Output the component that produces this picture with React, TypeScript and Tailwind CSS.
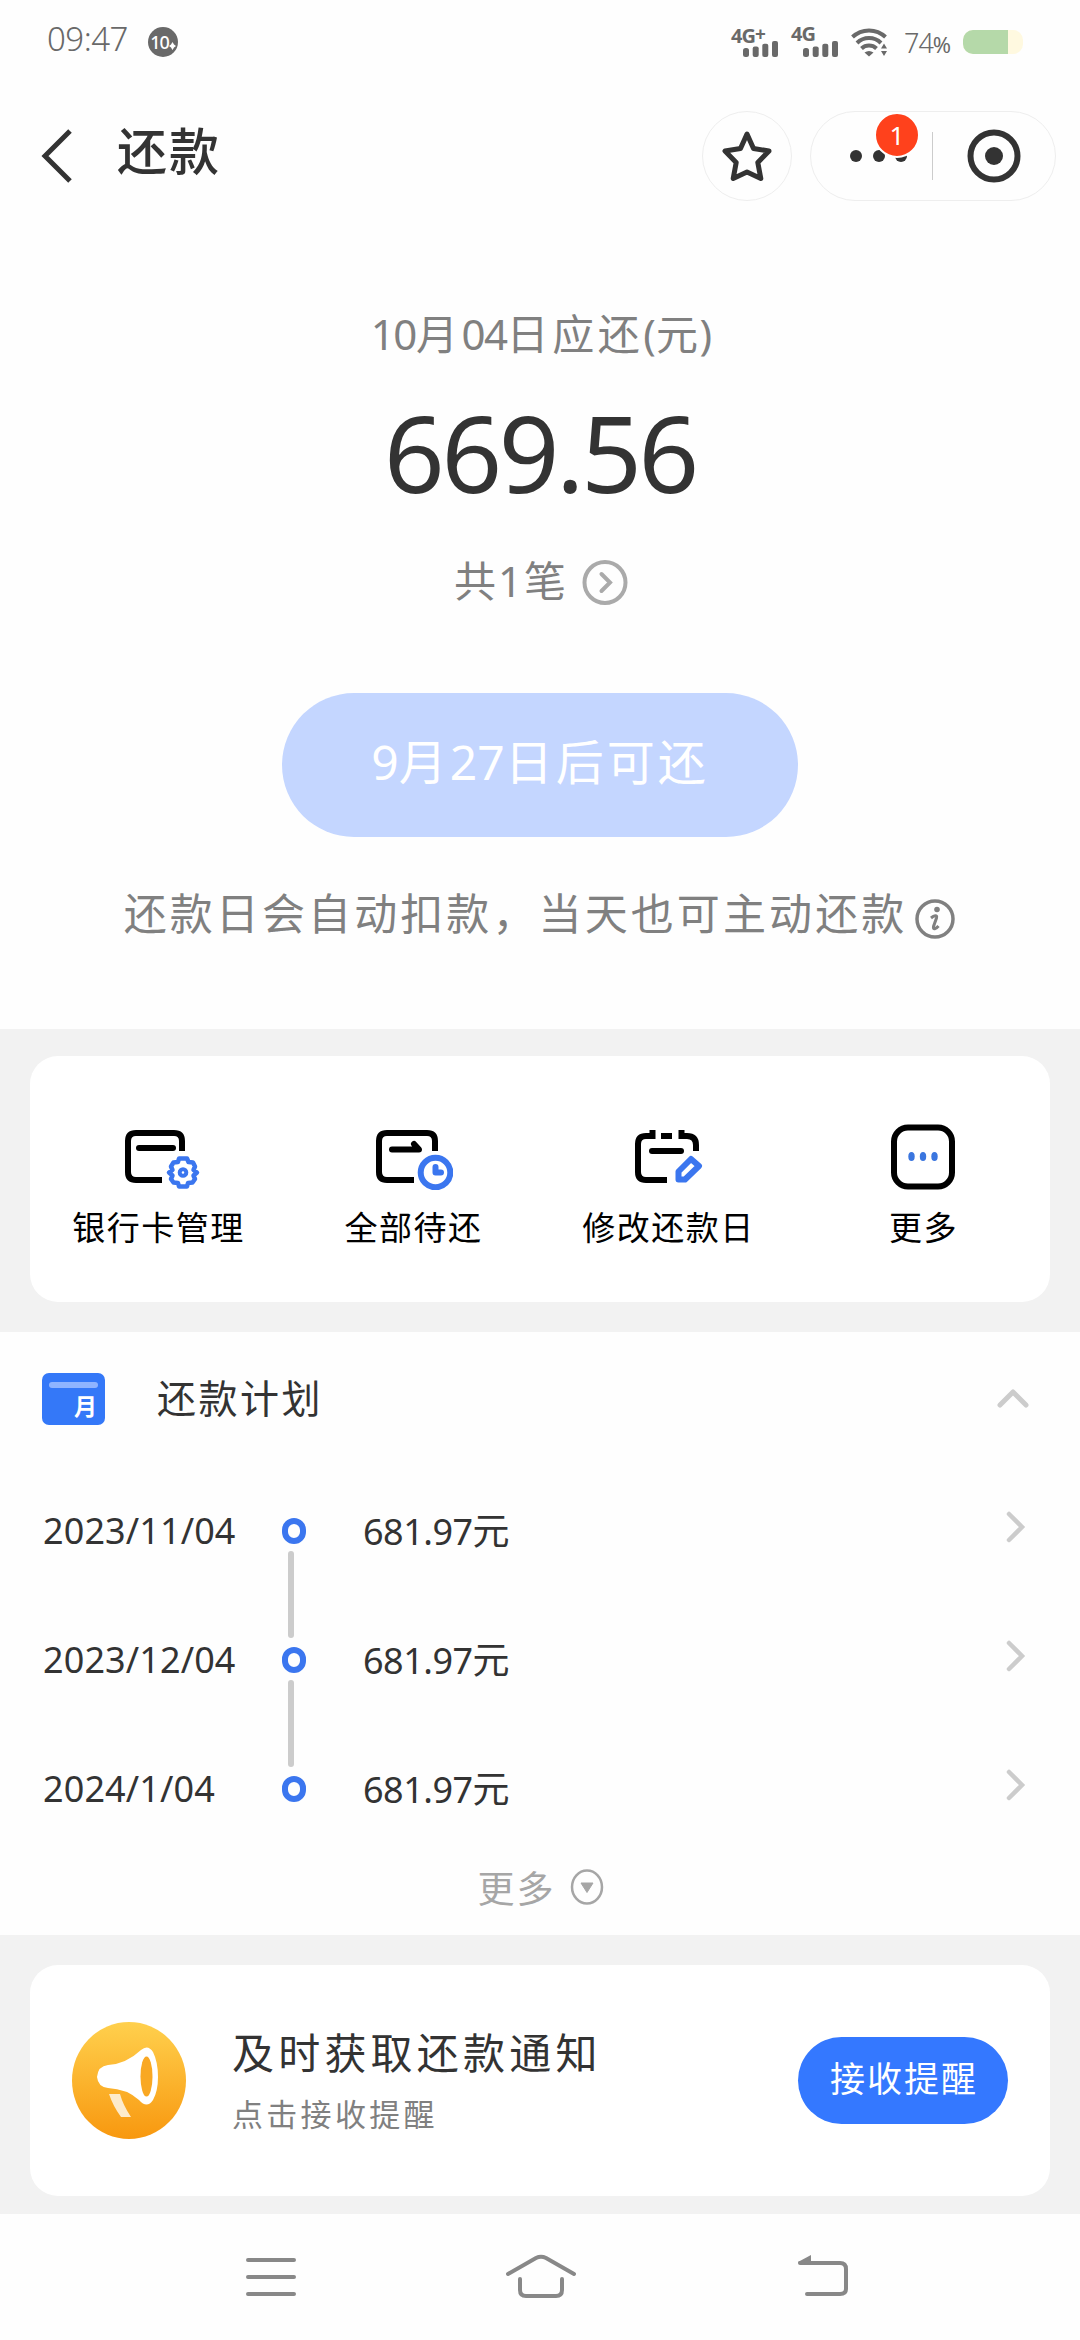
import React from 'react';

interface PlanItem {
  id: number;
  date: string;
  amount: string;
}

const plan: PlanItem[] = [
  { id: 1, date: '2023/11/04', amount: '681.97' },
  { id: 2, date: '2023/12/04', amount: '681.97' },
  { id: 3, date: '2024/1/04', amount: '681.97' },
];

const SignalBars = () => (
  <svg width="36" height="16" viewBox="0 0 36 16" fill="#696969">
    <rect x="0" y="7" width="6" height="9" rx="2.5" />
    <rect x="9.7" y="5.5" width="6" height="10.5" rx="2" />
    <rect x="19.3" y="2.8" width="6" height="13.2" rx="2" />
    <rect x="29" y="0" width="6" height="16" rx="2" />
  </svg>
);

const StatusBar = () => (
  <div className="flex h-[84px] items-center justify-between pl-[47px] pr-[57px] text-[#696969]">
    <div className="flex items-center">
      <span className="w-[101px] pb-[7px] text-[33px] leading-none font-light tracking-[-0.5px]">09:47</span>
      <span className="flex h-[30px] w-[30px] items-center justify-center rounded-full bg-[#696969] text-[18px] leading-none font-medium tracking-[-1px] text-white">
        10
        <svg width="7" height="8" viewBox="0 0 7 8" fill="#fff" className="mt-2">
          <path d="M3.5 0 L5 2.5 L7 4 L5 5.5 L3.5 8 L2 5.5 L0 4 L2 2.5 Z" />
        </svg>
      </span>
    </div>
    <div className="flex items-center">
      <div className="flex h-[30px] w-[60px] flex-col justify-between">
        <span className="h-[14px] text-[20px] leading-[14px] font-bold tracking-[-1px]">4G<span className="relative -top-0.5 text-[19px] leading-none">+</span></span>
        <span className="pl-3"><SignalBars /></span>
      </div>
      <div className="flex h-[30px] w-[60px] flex-col justify-between">
        <span className="h-[14px] text-[20px] leading-[14px] font-bold tracking-[-1px]">4G</span>
        <span className="pl-3"><SignalBars /></span>
      </div>
      <svg width="37" height="29" viewBox="0 0 37 29" fill="none" stroke="#696969" strokeWidth="4">
        <path d="M1.5 9 A24 24 0 0 1 34.500 9" />
        <path d="M6 15 A17 17 0 0 1 30 15" />
        <path d="M10.500 20.500 A11 11 0 0 1 25.500 20.500" />
        <path d="M13.500 24.500 Q18 21.500 22.500 24.500 L18 28.500 Z" fill="#696969" stroke="none" />
        <path d="M30 20.500 h6 l-3 -5 Z M30 23 h6 l-3 5 Z" fill="#696969" stroke="none" />
      </svg>
      <span className="ml-4 w-[59px] text-[27px] leading-none font-light tracking-[-1px]">
        74<span className="text-[22px] font-normal">%</span>
      </span>
      <span className="flex h-6 w-[60px] overflow-hidden rounded-[10px] bg-[#fff9e0]">
        <span className="h-full w-[45px] bg-[#b5d9a9]" />
      </span>
    </div>
  </div>
);

const Header = () => (
  <div className="flex h-[144px] items-center pr-6 pl-10">
    <svg width="32" height="54" viewBox="0 0 32 54" fill="none" stroke="#333" strokeWidth="5">
      <path d="M30 2 L5 27 L30 52" />
    </svg>
    <h1 className="ml-[45px] pb-[10px] text-[50px] leading-none font-medium tracking-[2px] text-[#333]">还款</h1>
    <span className="ml-auto flex h-[90px] w-[90px] items-center justify-center rounded-full border border-[#eee]">
      <svg width="50" height="52" viewBox="0 0 50 52" fill="none" stroke="#333" strokeWidth="5" strokeLinejoin="round">
        <path d="M25 4 L31.500 18.500 L47 21 L35.800 32.500 L38.800 48.500 L25 42 L11.200 48.500 L14.200 32.500 L3 21 L18.500 18.500 Z" />
      </svg>
    </span>
    <div className="ml-[18px] flex h-[90px] w-[246px] items-center rounded-full border border-[#eee]">
      <div className="relative ml-[39px] flex gap-[10.500px]">
        <span className="h-3 w-3 rounded-full bg-[#333]" />
        <span className="h-3 w-3 rounded-full bg-[#333]" />
        <span className="h-3 w-3 rounded-full bg-[#333]" />
        <span className="absolute -top-[38px] left-6 flex h-[46px] w-[46px] items-center justify-center rounded-full border-2 border-white bg-[#ff411c] text-[26px] leading-none text-white">
          1
        </span>
      </div>
      <span className="ml-[25px] h-12 w-px bg-[#ccc]" />
      <svg width="54" height="54" viewBox="0 0 54 54" className="ml-[34px]">
        <circle cx="27" cy="27" r="23.500" fill="none" stroke="#333" strokeWidth="6" />
        <circle cx="27" cy="27" r="9" fill="#333" />
      </svg>
    </div>
  </div>
);

const Summary = () => (
  <section className="flex h-[801px] flex-col items-center pt-[81px] text-[#808080]">
    <p className="flex h-[50px] items-center pl-[3px] text-[42px] leading-none tracking-[3.600px]">
      <span className="tracking-[-1.500px]">10</span>月<span className="tracking-[-1.500px]">04</span>日应还
      <span className="tracking-normal">(</span>元<span className="-ml-0.5 tracking-normal">)</span>
    </p>
    <p className="mt-[43px] flex h-[100px] items-center text-[106px] leading-none tracking-[-3.300px] text-[#333]">669.56</p>
    <div className="mt-[54px] flex h-[50px] items-center pl-0.5 text-[42px] leading-none">
      共<span className="px-0.5">1</span>笔
      <svg width="46" height="50" viewBox="0 0 46 50" fill="none" stroke="#aaa" strokeWidth="4" className="ml-[16px]">
        <circle cx="23" cy="26.500" r="20.500" />
        <path d="M19.500 18 L28 26.500 L19.500 35" strokeLinecap="round" />
      </svg>
    </div>
    <button className="mt-[87px] flex h-[144px] w-[516px] items-center justify-center rounded-full bg-[#c4d6ff] pb-[6px] text-[48px] leading-none tracking-[3px] text-white">
      <span className="tracking-normal">9</span>月<span className="tracking-normal">27</span>日后可还
    </button>
    <div className="mt-[51px] flex h-[50px] items-center text-[43px] leading-none tracking-[3.100px]">
      还款日会自动扣款，当天也可主动还款
      <svg width="42" height="42" viewBox="0 0 42 42" className="mt-[11px] ml-[7px]">
        <circle cx="21" cy="21" r="18" fill="none" stroke="#808080" strokeWidth="3.500" />
        <circle cx="23" cy="11.500" r="2.800" fill="#808080" />
        <path d="M17 20 C20 17.500 23.500 16.500 22.500 20 L19.500 28.500 C18.800 32 22 31 24.500 28" fill="none" stroke="#808080" strokeWidth="3" />
      </svg>
    </div>
  </section>
);

const CardSettingIcon = () => (
  <svg width="78" height="66" viewBox="0 0 78 66" fill="none">
    <path d="M59 27 V17 Q59 9 51 9 H13 Q5 9 5 17 V48 Q5 56 13 56 H39" stroke="#000" strokeWidth="6" />
    <path d="M16 24 H50" stroke="#000" strokeWidth="6" strokeLinecap="round" />
    <g stroke="#3b76ef" strokeLinejoin="round">
      <path
        d="M56 34.500 H64 L65.500 38 L70 38.500 L72 42.500 L70.500 46 L74 48.500 L70.500 51.500 L72 55 L69.500 58.500 L65 59 L64 62.500 H56 L55 59 L50.500 58.500 L48 55 L49.500 51.500 L46 48.500 L49.500 46 L48 42.500 L50.500 38.500 L55 38 Z"
        strokeWidth="4.500"
      />
      <circle cx="60" cy="48.500" r="3.300" strokeWidth="4" />
    </g>
  </svg>
);

const PendingIcon = () => (
  <svg width="80" height="66" viewBox="0 0 80 66" fill="none">
    <path d="M62 27 V17 Q62 9 54 9 H14 Q6 9 6 17 V48 Q6 56 14 56 H41" stroke="#000" strokeWidth="6" />
    <path d="M19 25.500 H46 L41 20" stroke="#000" strokeWidth="6" strokeLinecap="round" strokeLinejoin="round" />
    <circle cx="62.500" cy="48.500" r="14.800" stroke="#3b76ef" strokeWidth="6" />
    <path d="M62.500 43 V48.500 H68" stroke="#3b76ef" strokeWidth="6" strokeLinecap="round" strokeLinejoin="round" />
  </svg>
);

const EditDateIcon = () => (
  <svg width="74" height="66" viewBox="0 0 74 66" fill="none">
    <g stroke="#000" strokeWidth="6">
      <path d="M23 12 H14 Q6 12 6 20 V48 Q6 56 14 56 H35" />
      <path d="M47 12 H55 Q64 12 64 21 V27" />
      <path d="M20.500 6 V15 M49.500 6 V15" />
      <path d="M29 12 H40" />
      <path d="M20 27 H49" strokeLinecap="round" />
    </g>
    <path d="M59 35 L67 42 L53 55.500 H46.500 V47.500 Z" stroke="#3b76ef" strokeWidth="6" strokeLinejoin="round" />
  </svg>
);

const MoreIcon = () => (
  <svg width="66" height="66" viewBox="0 0 66 66" fill="none">
    <rect x="4" y="3.500" width="58" height="59" rx="14" stroke="#000" strokeWidth="6" />
    <ellipse cx="21.500" cy="32.500" rx="3.200" ry="4.500" fill="#3b76df" />
    <ellipse cx="33" cy="32.500" rx="3.200" ry="4.500" fill="#3b76df" />
    <ellipse cx="44.500" cy="32.500" rx="3.200" ry="4.500" fill="#3b76df" />
  </svg>
);

const actions = [
  { label: '银行卡管理', icon: <CardSettingIcon />, pad: 'pl-[8px]' },
  { label: '全部待还', icon: <PendingIcon />, pad: 'pl-0' },
  { label: '修改还款日', icon: <EditDateIcon />, pad: 'pl-[3px]' },
  { label: '更多', icon: <MoreIcon />, pad: 'pl-0' },
];

const QuickActions = () => (
  <section className="h-[303px] bg-[#f2f2f2] px-[30px] pt-[27px]">
    <div className="grid h-[246px] grid-cols-4 rounded-[28px] bg-white pt-[68px]">
      {actions.map((item) => (
        <div key={item.label} className="flex flex-col items-center">
          <div className={item.pad}>{item.icon}</div>
          <span className="mt-[18px] pl-0.5 text-[33px] leading-10 tracking-[1.500px] text-black">{item.label}</span>
        </div>
      ))}
    </div>
  </section>
);

const RepaymentPlan = () => (
  <section className="h-[603px] text-[#333]">
    <div className="flex h-[134px] items-center pl-[42px] pr-[50px]">
      <div className="flex h-[52px] w-[63px] flex-col items-center rounded-[7px] bg-[#3478f8] pt-[9px]">
        <span className="h-[6px] w-[49px] rounded-full bg-[#8fb4ff]" />
        <span className="mt-[6px] self-end pr-[8px] text-[23px] leading-[24px] font-bold text-white">月</span>
      </div>
      <h2 className="ml-[52px] pb-[3px] text-[39px] leading-none tracking-[2.500px]">还款计划</h2>
      <svg width="34" height="22" viewBox="0 0 34 22" fill="none" stroke="#ccc" strokeWidth="5" strokeLinecap="round" strokeLinejoin="round" className="mb-0.5 ml-auto">
        <path d="M4 18 L17 5 L30 18" />
      </svg>
    </div>
    {plan.map((item, index) => (
      <div key={item.id} className="flex h-[129px] items-center pr-[53px] pl-[43px] text-[36px] leading-none">
        <span className="w-[239px] tracking-[0.100px]">{item.date}</span>
        <span className="relative flex w-6 justify-center">
          <span className="h-[26px] w-6 rounded-[12px] border-[6px] border-[#3b76ef]" />
          {index < plan.length - 1 && <span className="absolute top-[33px] left-[6px] h-[87px] w-[6px] rounded-full bg-[#ccc]" />}
        </span>
        <span className="ml-[57px] tracking-[-0.500px]">{item.amount}<span className="text-[37px]">元</span></span>
        <svg width="22" height="36" viewBox="0 0 22 36" fill="none" stroke="#ccc" strokeWidth="4.500" strokeLinecap="round" className="mb-2 ml-auto">
          <path d="M4 5 L17 18 L4 31" />
        </svg>
      </div>
    ))}
    <div className="flex h-[70px] items-center justify-center pl-0.5 text-[37px] leading-none tracking-[2px] text-[#a6a6a6]">
      更多
      <svg width="36" height="38" viewBox="0 0 36 38" fill="none" className="ml-[13px]">
        <ellipse cx="18" cy="18" rx="15" ry="16.500" stroke="#a6a6a6" strokeWidth="2.500" />
        <path d="M12 14 H24 L18 23.500 Z" fill="#a6a6a6" stroke="#a6a6a6" strokeLinejoin="round" />
      </svg>
    </div>
  </section>
);

const Notice = () => (
  <section className="h-[279px] bg-[#f2f2f2] px-[30px] pt-[30px]">
    <div className="flex h-[231px] items-center rounded-[28px] bg-white px-[42px]">
      <svg width="114" height="117" viewBox="0 0 114 117">
        <defs>
          <linearGradient id="horn" x1="0" y1="0" x2="0" y2="1">
            <stop offset="0" stopColor="#ffd04d" />
            <stop offset="1" stopColor="#f8980f" />
          </linearGradient>
        </defs>
        <ellipse cx="57" cy="58.500" rx="57" ry="58.500" fill="url(#horn)" />
        <path d="M25 55 Q26 44 36 43 Q54 42 69 28 Q76 22 81 30 Q86 40 86 55 Q86 69 81 78 Q75 87 67 78 Q55 67 36 66 Q26 65 25 55 Z" fill="#fff" />
        <ellipse cx="74.500" cy="54.500" rx="6" ry="20" fill="#f9a823" />
        <path d="M37 72 H48 Q51 83 59 95 H49 Q41 84 37 72 Z" fill="#fdebcb" />
      </svg>
      <div className="ml-[46px] flex flex-col">
        <span className="text-[42px] leading-[60px] tracking-[4.200px] text-[#333]">及时获取还款通知</span>
        <span className="mt-[6px] text-[31px] leading-[50px] tracking-[3.300px] text-[#808080]">点击接收提醒</span>
      </div>
      <button className="ml-auto flex h-[87px] w-[210px] items-center justify-center rounded-full bg-[#3478ff] pb-1 pl-0.5 text-[35px] leading-none tracking-[2px] text-white">
        接收提醒
      </button>
    </div>
  </section>
);

const NavBar = () => (
  <nav className="flex h-[126px] items-center pl-[245px] text-[#888]">
    <svg width="52" height="44" viewBox="0 0 52 44" stroke="currentColor" strokeWidth="4" strokeLinecap="round">
      <path d="M3 5 H49 M3 22 H49 M3 39 H49" />
    </svg>
    <svg width="72" height="48" viewBox="0 0 72 48" fill="none" stroke="currentColor" strokeWidth="4" strokeLinecap="round" strokeLinejoin="round" className="ml-[208px]">
      <path d="M3 21 L31 5 Q36 2.500 41 5 L69 21" />
      <path d="M15 26 V37 Q15 43 21 43 H51 Q57 43 57 37 V26" />
    </svg>
    <svg width="54" height="48" viewBox="0 0 54 48" fill="none" stroke="currentColor" strokeWidth="4" strokeLinecap="round" className="ml-[219px]">
      <path d="M4 10 H44 Q50 10 50 16 V36 Q50 41 44 41 H11" />
      <path d="M2 9 L15 2 V10 L3 11 Z" fill="currentColor" stroke="none" />
    </svg>
  </nav>
);

export default function App() {
  return (
    <main className="h-[2340px] w-[1080px] overflow-hidden bg-[#fefefe] font-['Noto_Sans','Noto_Sans_CJK_SC',sans-serif]">
      <StatusBar />
      <Header />
      <Summary />
      <QuickActions />
      <RepaymentPlan />
      <Notice />
      <NavBar />
    </main>
  );
}
